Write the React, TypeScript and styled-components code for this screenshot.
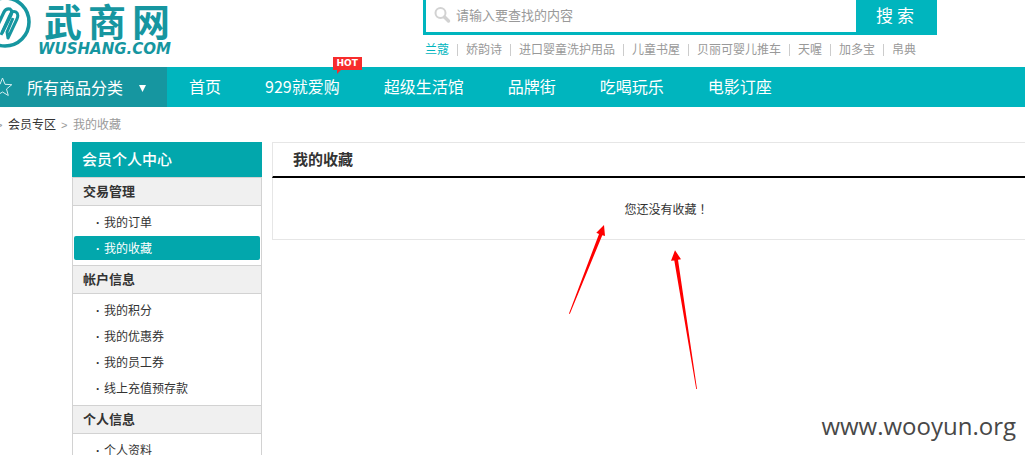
import React from 'react';
import styled, { createGlobalStyle, css } from 'styled-components';

const teal = '#00b5be';
const deepTeal = '#1696a0';
const panelTeal = '#02a7ac';

const GlobalStyle = createGlobalStyle`
  * { box-sizing: border-box; }
  body {
    margin: 0;
    background: #fff;
    color: #333;
    font: 12px/18px "Liberation Sans", "Noto Sans CJK SC", sans-serif;
  }
  a { color: inherit; text-decoration: none; }
  ul, ol { list-style: none; margin: 0; padding: 0; }
  h1, h2, h3, p { margin: 0; }
`;

const Page = styled.div`
  position: relative;
  height: 100vh;
  overflow: hidden;
`;

const Header = styled.header`
  display: flex;
  height: 67px;
`;

const Logo = styled.a`
  display: flex;
  flex: 0 0 423px;
  color: ${deepTeal};
`;

const Emblem = styled.svg`
  width: 38px;
  height: 56px;
`;

const Wordmark = styled.span`
  display: flex;
  flex-direction: column;
`;

const BrandName = styled.span`
  display: flex;
  gap: 6px;
  padding-left: 6px;
  font: bold 38px/40px "Noto Sans CJK SC", sans-serif;
`;

const BrandDomain = styled.span`
  font: italic bold 15px/18px "DejaVu Sans", sans-serif;
`;

const SearchArea = styled.div`
  flex: 0 0 514px;
`;

const SearchForm = styled.form`
  display: flex;
  height: 35px;
  border: solid ${teal};
  border-width: 0 0 3px 3px;
`;

const SearchField = styled.label`
  display: flex;
  flex: 1;
  align-items: center;
  gap: 5px;
  padding: 0 0 2px 8px;
`;

const SearchInput = styled.input`
  flex: 1;
  min-width: 0;
  border: 0;
  padding: 0;
  outline: 0;
  background: none;
  font: 13px/20px "Noto Sans CJK SC", sans-serif;
  color: #333;
  &::placeholder { color: #999; opacity: 1; }
`;

const SearchButton = styled.button`
  width: 81px;
  height: 35px;
  border: 0;
  padding: 0 3px 5px 0;
  background: ${teal};
  color: #fff;
  font: 17px/24px "Noto Sans CJK SC", sans-serif;
`;

const HotWords = styled.ul`
  display: flex;
  padding: 6px 0 0 2px;
`;

const HotWord = styled.li<{ $active?: boolean }>`
  display: flex;
  align-items: center;
  white-space: nowrap;
  color: ${p => (p.$active ? teal : '#999')};
  &:not(:first-child)::before {
    content: '';
    width: 1px;
    height: 12px;
    margin: 0 8px;
    background: #ccc;
  }
`;

const NavBar = styled.nav`
  display: flex;
  height: 40px;
  background: ${teal};
  color: #fff;
  font: 16px/38px "Noto Sans CJK SC", sans-serif;
`;

const Categories = styled.a`
  display: flex;
  align-items: center;
  width: 167px;
  background: ${deepTeal};
`;

const Star = styled.svg`
  width: 13px;
  height: 20px;
  margin-right: 14px;
`;

const Caret = styled.svg`
  width: 7px;
  height: 7px;
  margin: 3px 0 0 16px;
`;

const NavItem = styled.a`
  position: relative;
  padding: 0 22px;
`;

const HotBadge = styled.span`
  position: absolute;
  top: -10px;
  right: 0;
  width: 29px;
  height: 13px;
  background: #f72c2c;
  font: bold 9px/13px "DejaVu Sans", sans-serif;
  text-align: center;
  &::after {
    content: '';
    position: absolute;
    left: 4px;
    top: 13px;
    border-top: 4px solid #f72c2c;
    border-right: 4px solid transparent;
  }
`;

const Breadcrumb = styled.nav`
  display: flex;
  height: 35px;
  gap: 5px;
  line-height: 37px;
  color: #999;
  & > a { color: #333; }
`;

const Separator = styled.span`
  width: 7px;
  font-size: 11px;
  &:first-child { width: 3px; text-indent: -4px; }
`;

const Columns = styled.div`
  display: flex;
  gap: 10px;
  padding-left: 72px;
`;

const Sidebar = styled.aside`
  flex: 0 0 190px;
`;

const SidebarTitle = styled.h2`
  height: 35px;
  padding-left: 10px;
  background: ${panelTeal};
  color: #fff;
  font: 500 15px/33px "Noto Sans CJK SC", sans-serif;
`;

const SidebarBody = styled.div`
  border: solid #d2d2d2;
  border-width: 0 1px;
`;

const GroupTitle = styled.h3`
  height: 29px;
  padding-left: 10px;
  border: solid #d2d2d2;
  border-width: 1px 0;
  background: #f0f0f0;
  font: bold 13px/25px "Noto Sans CJK SC", sans-serif;
`;

const GroupList = styled.ul`
  padding: 3px 1px 4px;
`;

const Entry = styled.a<{ $active?: boolean }>`
  display: flex;
  gap: 4px;
  height: 24px;
  margin: 1px 0;
  padding-left: 22px;
  border-radius: 2px;
  line-height: 26px;
  ${p => p.$active && css`
    background: ${panelTeal};
    color: #fff;
  `}
`;

const Bullet = styled.span`
  width: 4px;
  font-weight: bold;
`;

const Item = styled.li`
  display: flow-root;
`;

const Panel = styled.main`
  flex: 1;
  margin-right: -35px;
`;

const PanelTitle = styled.h1`
  height: 36px;
  padding-left: 20px;
  border: solid #e6e6e6;
  border-width: 1px 0 0 1px;
  border-bottom: 2px solid #000;
  font: bold 15px/31px "Noto Sans CJK SC", sans-serif;
`;

const EmptyMessage = styled.p`
  height: 62px;
  border: solid #e6e6e6;
  border-width: 0 0 1px 1px;
  font-family: "Noto Sans CJK TC", sans-serif;
  line-height: 62px;
  text-align: center;
`;

const Arrows = styled.svg`
  position: absolute;
  left: 560px;
  top: 220px;
  width: 150px;
  height: 180px;
  pointer-events: none;
`;

const Watermark = styled.span`
  position: absolute;
  right: 9px;
  bottom: 12px;
  color: #484848;
  font: 24px/34px "Open Sans", sans-serif;
`;

const hotWords = ['兰蔻', '娇韵诗', '进口婴童洗护用品', '儿童书屋', '贝丽可婴儿推车', '天喔', '加多宝', '帛典'];
const navItems = ['首页', '929就爱购', '超级生活馆', '品牌街', '吃喝玩乐', '电影订座'];
const groups = [
  { title: '交易管理', entries: ['我的订单', '我的收藏'] },
  { title: '帐户信息', entries: ['我的积分', '我的优惠券', '我的员工券', '线上充值预存款'] },
  { title: '个人信息', entries: ['个人资料'] },
];

export default function App() {
  return (
    <Page>
      <GlobalStyle />
      <Header>
        <Logo href="#">
          <Emblem viewBox="0 0 38 56" fill="none" stroke="currentColor" aria-hidden="true">
            <circle cx="5" cy="22" r="24" strokeWidth="3.6" />
            <path d="M-5 31 4 12Q6 8 10 9Q13 11 11 15L2 33" strokeWidth="3.2" />
            <path d="M1 35 10 15Q12 10 16 12Q19 14 17 19L8 38 7 32 13 18" strokeWidth="3" strokeLinejoin="round" />
          </Emblem>
          <Wordmark>
            <BrandName><span>武</span><span>商</span><span>网</span></BrandName>
            <BrandDomain>WUSHANG.COM</BrandDomain>
          </Wordmark>
        </Logo>
        <SearchArea>
          <SearchForm onSubmit={e => e.preventDefault()}>
            <SearchField>
              <svg width="17" height="18" viewBox="0 0 17 18" fill="none" stroke="#d2d2d2" aria-hidden="true">
                <circle cx="6.5" cy="7" r="5" strokeWidth="2" />
                <path d="M10.5 11 14.5 15" strokeWidth="3.4" strokeLinecap="round" />
              </svg>
              <SearchInput type="text" aria-label="搜索" placeholder="请输入要查找的内容" />
            </SearchField>
            <SearchButton type="submit">搜 索</SearchButton>
          </SearchForm>
          <HotWords>
            {hotWords.map((word, i) => (
              <HotWord key={word} $active={i === 0}><a href="#">{word}</a></HotWord>
            ))}
          </HotWords>
        </SearchArea>
      </Header>
      <NavBar>
        <Categories href="#">
          <Star viewBox="0 0 13 20" fill="none" stroke="#d5eef0" aria-hidden="true">
            <path d="M2.5 1 5 7.3 11.8 7.7 6.5 12 8.3 18.5 2.5 15-3.3 18.5-1.5 12-6.8 7.7 0 7.3Z" />
          </Star>
          所有商品分类
          <Caret viewBox="0 0 7 7" aria-hidden="true"><path d="M0 0H7L3.5 7Z" fill="#fff" /></Caret>
        </Categories>
        {navItems.map((item, i) => (
          <NavItem key={item} href="#">
            {item}
            {i === 1 && <HotBadge>HOT</HotBadge>}
          </NavItem>
        ))}
      </NavBar>
      <Breadcrumb aria-label="breadcrumb">
        <Separator>&gt;</Separator>
        <a href="#">会员专区</a>
        <Separator>&gt;</Separator>
        <span>我的收藏</span>
      </Breadcrumb>
      <Columns>
        <Sidebar>
          <SidebarTitle>会员个人中心</SidebarTitle>
          <SidebarBody>
            {groups.map(group => (
              <section key={group.title}>
                <GroupTitle>{group.title}</GroupTitle>
                <GroupList>
                  {group.entries.map(entry => (
                    <Item key={entry}>
                      <Entry href="#" $active={entry === '我的收藏'}>
                        <Bullet>·</Bullet>
                        {entry}
                      </Entry>
                    </Item>
                  ))}
                </GroupList>
              </section>
            ))}
          </SidebarBody>
        </Sidebar>
        <Panel>
          <PanelTitle>我的收藏</PanelTitle>
          <EmptyMessage>您还没有收藏！</EmptyMessage>
        </Panel>
      </Columns>
      <Arrows viewBox="560 220 150 180" fill="#f00" aria-hidden="true">
        <path d="M604 225 605 236 602.3 235.2 569.8 314 569 313.4 599 233.9 596.3 232.7Z" />
        <path d="M675 250.3 681 259.3 678 259.8 697 389 696.2 389 674.3 260.4 671 260.8Z" />
      </Arrows>
      <Watermark>www.wooyun.org</Watermark>
    </Page>
  );
}
